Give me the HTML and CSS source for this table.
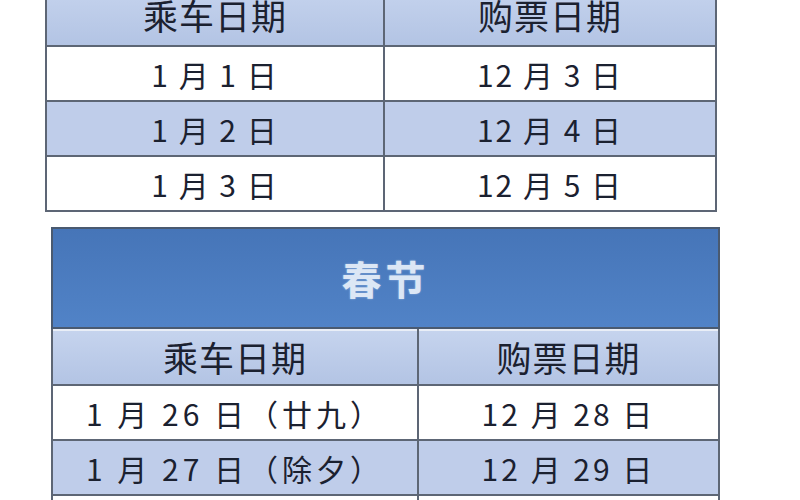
FILE: index.html
```html
<!DOCTYPE html>
<html lang="zh-CN">
<head>
<meta charset="utf-8">
<title>乘车日期与购票日期</title>
<link rel="stylesheet" href="styles.css">
</head>
<body>
<div class="page">
  <table class="grid grid-top">
    <colgroup><col class="c-left-top"><col class="c-right-top"></colgroup>
    <tr class="head"><th>乘车日期</th><th>购票日期</th></tr>
    <tr class="plain"><td>1 月 1 日</td><td>12 月 3 日</td></tr>
    <tr class="tint"><td>1 月 2 日</td><td>12 月 4 日</td></tr>
    <tr class="plain"><td>1 月 3 日</td><td>12 月 5 日</td></tr>
  </table>

  <table class="grid grid-bottom">
    <colgroup><col class="c-left-bot"><col class="c-right-bot"></colgroup>
    <tr class="title"><th colspan="2">春节</th></tr>
    <tr class="head"><th>乘车日期</th><th>购票日期</th></tr>
    <tr class="plain"><td>1 月 26 日（廿九）</td><td>12 月 28 日</td></tr>
    <tr class="tint"><td>1 月 27 日（除夕）</td><td>12 月 29 日</td></tr>
    <tr class="plain"><td></td><td></td></tr>
  </table>
</div>
</body>
</html>
```

FILE: styles.css
```css
html, body {
  margin: 0;
  padding: 0;
  background: #ffffff;
}

body {
  width: 800px;
  height: 500px;
  overflow: hidden;
  font-family: "Noto Sans CJK SC", "Noto Sans", sans-serif;
  color: #1b2130;
}

.page {
  display: flex;
  flex-direction: column;
  align-items: flex-start;
}

.grid {
  border-collapse: collapse;
  table-layout: fixed;
}

.grid th,
.grid td {
  border: 2px solid #5d6675;
  text-align: center;
  vertical-align: middle;
  padding: 0;
  font-weight: 400;
  white-space: nowrap;
}

.grid-top {
  margin: -17px 0 0 45px;
  width: 670px;
}

.c-left-top { width: 338px; }
.c-right-top { width: 332px; }

.grid-top tr { height: 55px; }
.grid-top tr.head { height: 62px; }

.grid-top td {
  font-size: 30px;
  letter-spacing: 2px;
}

.grid-top .head th {
  padding-bottom: 2px;
}

.head th {
  font-size: 35px;
  letter-spacing: 1px;
  background: linear-gradient(#c6d4ee, #b3c4e4);
  line-height: 1;
}

.plain td { background: #ffffff; }
.tint td { background: #bfcdea; }

.grid-bottom {
  margin: 15px 0 0 51px;
  width: 667px;
}

.c-left-bot { width: 366px; }
.c-right-bot { width: 301px; }

.grid-bottom tr { height: 55px; }
.grid-bottom tr.head { height: 57px; }

.grid-bottom .head th {
  box-shadow: inset 0 2px 0 #e9eef7;
}

.grid-bottom td {
  font-size: 30px;
  letter-spacing: 4px;
}

.grid-bottom td:last-child {
  letter-spacing: 3px;
}

.grid-bottom tr.title { height: 100px; }

.title th {
  background: linear-gradient(#4675b8, #5183c7);
  border-color: #4a5a70;
  color: #dce7f5;
  font-size: 40px;
  font-weight: 700;
  letter-spacing: 4px;
  text-shadow: 0 0 2px rgba(210, 225, 245, 0.6);
}
```
